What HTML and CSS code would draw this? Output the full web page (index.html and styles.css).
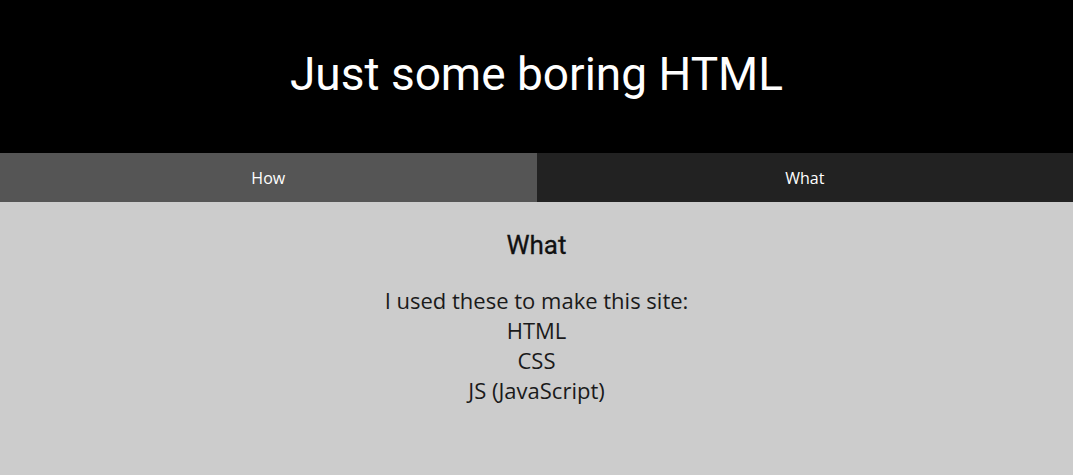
FILE: index.html
```html
<!DOCTYPE html>
<html>
<head>
<meta charset="utf-8">
<link rel="stylesheet" href="styles.css">
</head>
<body>
<header class="header">
  <h1 class="title">Just some boring HTML</h1>
</header>
<nav class="tabs">
  <button class="tab tab-inactive">How</button>
  <button class="tab tab-active">What</button>
</nav>
<main class="content">
  <h2 class="heading">What</h2>
  <p class="text">I used these to make this site:<br>HTML<br>CSS<br>JS (JavaScript)</p>
</main>
</body>
</html>
```
FILE: styles.css
```css
html, body {
  margin: 0;
  padding: 0;
  height: 100%;
}
body {
  background: #cccccc;
  font-family: "Open Sans", sans-serif;
}
.header {
  background: #000;
  height: 153px;
  display: flex;
  align-items: center;
  justify-content: center;
}
.title {
  margin: 0;
  color: #fff;
  font-family: Roboto, sans-serif;
  font-weight: 400;
  font-size: 46px;
  line-height: 1;
  padding-bottom: 6px;
}
.tabs {
  display: flex;
  height: 49px;
}
.tab {
  flex: 1;
  border: none;
  margin: 0;
  padding: 0;
  color: #fff;
  font-family: "Open Sans", sans-serif;
  font-size: 16px;
}
.tab-inactive {
  background: #555555;
}
.tab-active {
  background: #222222;
}
.content {
  text-align: center;
  color: #111;
  padding-top: 27px;
}
.heading {
  margin: 0;
  font-family: Roboto, sans-serif;
  font-weight: 400;
  font-size: 26px;
  line-height: 32px;
  color: #111;
  -webkit-text-stroke: 0.3px #111;
}
.text {
  margin: 24px 0 0;
  font-size: 22px;
  line-height: 30px;
  color: #1a1a1a;
}
```
